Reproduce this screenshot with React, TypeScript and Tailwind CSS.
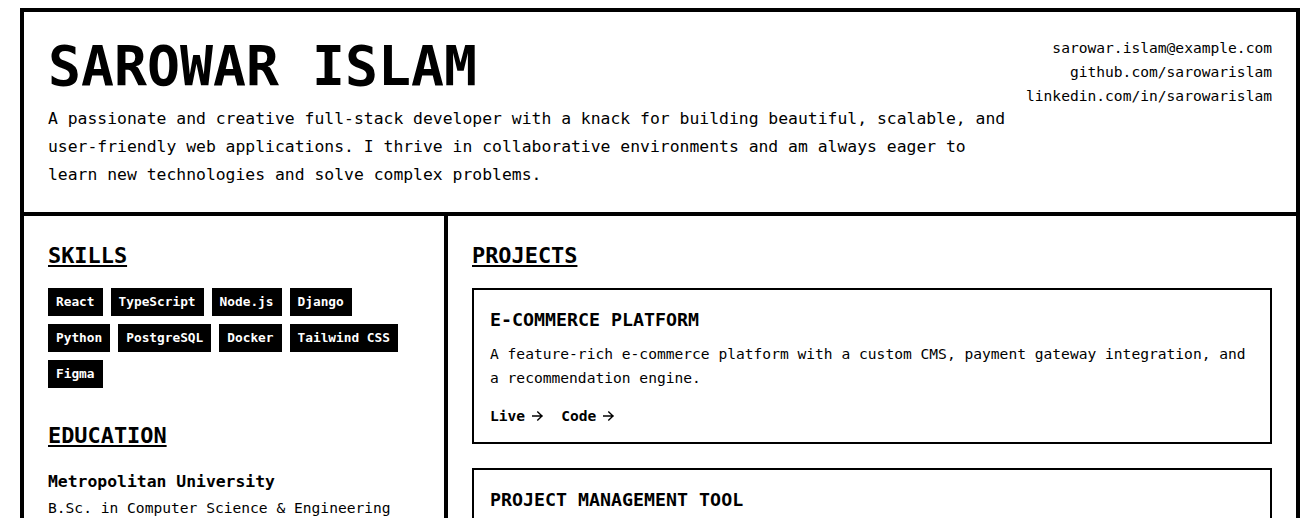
import React from "react";

const skills = ["React", "TypeScript", "Node.js", "Django", "Python", "PostgreSQL", "Docker", "Tailwind CSS", "Figma"];

const projects = [
  {
    title: "E-COMMERCE PLATFORM",
    desc: "A feature-rich e-commerce platform with a custom CMS, payment gateway integration, and a recommendation engine.",
  },
  {
    title: "PROJECT MANAGEMENT TOOL",
    desc: "A collaborative project management tool with real-time updates, task tracking, and team dashboards.",
  },
];

function Arrow() {
  return (
    <svg width="11" height="10" viewBox="0 0 11 10" fill="none" stroke="currentColor" strokeWidth="1.4" className="ml-[7px]">
      <path d="M0.5 5H10M5.8 1L10 5L5.8 9" strokeLinecap="square" />
    </svg>
  );
}

export default function App() {
  return (
    <div
      className="min-h-screen bg-white text-black"
      style={{ fontFamily: "'DejaVu Sans Mono', 'Liberation Mono', monospace" }}
    >
      <div className="ml-5 mt-2 w-[1280px] border-4 border-black">
        <header className="flex items-start gap-4 border-b-4 border-black px-6 pb-[23px] pt-6">
          <div className="flex-1">
            <h1 className="mb-[9px] text-[54.8px] font-bold leading-[60px]">SAROWAR ISLAM</h1>
            <p className="text-[16.4px] leading-7">
              A passionate and creative full-stack developer with a knack for building beautiful, scalable, and
              user-friendly web applications. I thrive in collaborative environments and am always eager to learn new
              technologies and solve complex problems.
            </p>
          </div>
          <div className="flex flex-col items-end text-right text-[14.6px] leading-6">
            <span>sarowar.islam@example.com</span>
            <span>github.com/sarowarislam</span>
            <span>linkedin.com/in/sarowarislam</span>
          </div>
        </header>
        <div className="grid grid-cols-3">
          <aside className="col-span-1 border-r-4 border-black p-6">
            <section className="mb-8">
              <h2 className="mb-4 text-[21.9px] font-bold leading-8 underline decoration-2 underline-offset-2">SKILLS</h2>
              <div className="flex flex-wrap gap-2">
                {skills.map((s) => (
                  <span key={s} className="bg-black px-2 py-1 text-[12.8px] font-bold leading-5 text-white">
                    {s}
                  </span>
                ))}
              </div>
            </section>
            <section>
              <h2 className="mb-4 text-[21.9px] font-bold leading-8 underline decoration-2 underline-offset-2">EDUCATION</h2>
              <div className="text-[16.4px] font-bold leading-7">Metropolitan University</div>
              <div className="text-[14.6px] leading-6">B.Sc. in Computer Science &amp; Engineering</div>
              <div className="text-[14.6px] leading-6">2016 - 2020</div>
            </section>
          </aside>
          <main className="col-span-2 p-6">
            <h2 className="mb-4 text-[21.9px] font-bold leading-8 underline decoration-2 underline-offset-2">PROJECTS</h2>
            <div className="flex flex-col gap-6">
              {projects.map((p) => (
                <div key={p.title} className="border-2 border-black p-4">
                  <h3 className="mb-2 text-[18.3px] font-bold leading-7">{p.title}</h3>
                  <p className="text-[14.6px] leading-6">{p.desc}</p>
                  <div className="mt-4 flex gap-[18px] text-[14.6px] font-bold leading-5">
                    <span className="inline-flex items-center">
                      Live
                      <Arrow />
                    </span>
                    <span className="inline-flex items-center">
                      Code
                      <Arrow />
                    </span>
                  </div>
                </div>
              ))}
            </div>
          </main>
        </div>
      </div>
    </div>
  );
}
